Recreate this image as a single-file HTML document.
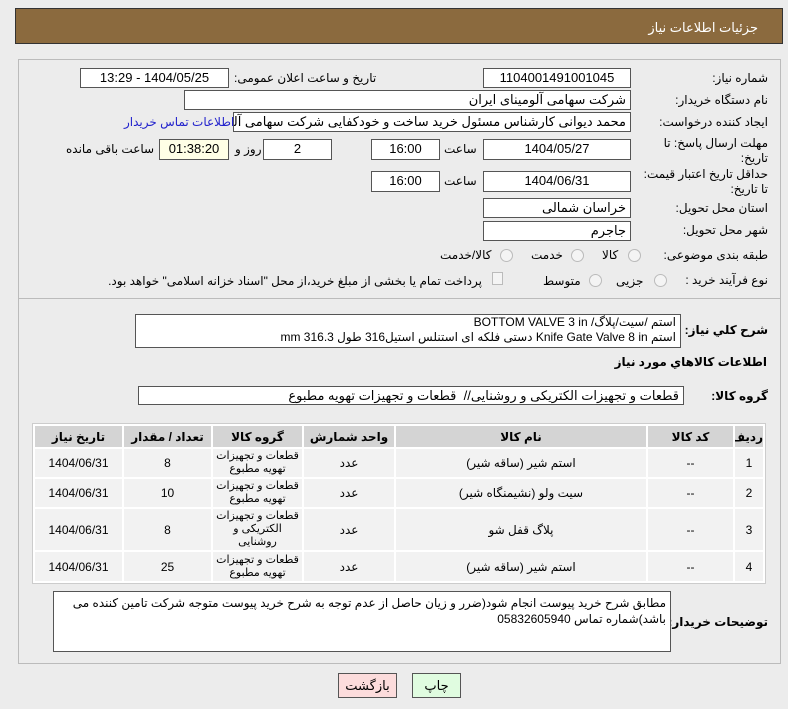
<!DOCTYPE html>
<html><head><meta charset="utf-8"><style>
body{margin:0;width:788px;height:709px;background:#ececec;font-family:"Liberation Sans","DejaVu Sans",sans-serif;font-size:12px;color:#000;position:relative;overflow:hidden}
.a{position:absolute;white-space:nowrap}
.box{position:absolute;background:#fff;border:1px solid #555;box-sizing:border-box;text-align:center;line-height:18px;font-size:13px;direction:rtl;overflow:hidden;white-space:nowrap}
.l{position:absolute;white-space:nowrap;font-size:12px;direction:rtl}
.r{text-align:right;padding-right:4px}
table{position:absolute;left:32px;top:423px;width:734px;border-collapse:separate;border-spacing:2px;background:#fff;border:1px solid #ccc;font-size:12px;table-layout:fixed;direction:rtl}
th{background:#d4d4d4;height:21px;font-weight:bold;padding:0;white-space:nowrap;overflow:hidden}
td{background:#f2f2f2;text-align:center;padding:0;overflow:hidden}
td.g{font-size:11px;line-height:13px}
.rad{position:absolute;width:11px;height:11px;border-radius:50%;border:1px solid #bbb;background:#f4f4f4}
</style></head><body>
<div class="a" style="left:15px;top:8px;width:768px;height:36px;background:#8b6a3e;border:1px solid #333;box-sizing:border-box"></div>
<div class="l" style="right:30px;top:20px;color:#fff;font-size:13px">جزئیات اطلاعات نیاز</div>
<div class="a" style="left:18px;top:59px;width:763px;height:605px;border:1px solid #bbb;box-sizing:border-box"></div>
<div class="a" style="left:18px;top:298px;width:763px;height:1px;background:#bbb"></div>

<div class="l" style="right:20px;top:71px">شماره نیاز:</div>
<div class="box" style="left:483px;top:68px;width:148px;height:20px">1104001491001045</div>
<div class="l" style="left:234px;top:71px">تاریخ و ساعت اعلان عمومی:</div>
<div class="box" style="left:80px;top:68px;width:149px;height:20px">1404/05/25 - 13:29</div>

<div class="l" style="right:20px;top:93px">نام دستگاه خریدار:</div>
<div class="box r" style="left:184px;top:90px;width:447px;height:20px">شرکت سهامی آلومینای ایران</div>

<div class="l" style="right:20px;top:115px">ایجاد کننده درخواست:</div>
<div class="box r" style="left:233px;top:112px;width:398px;height:20px">محمد دیوانی کارشناس مسئول خرید ساخت و خودکفایی شرکت سهامی آلومینا</div>
<div class="l" style="left:124px;top:115px;color:#2222cc">اطلاعات تماس خریدار</div>

<div class="l" style="right:20px;top:136px;line-height:15px;text-align:right">مهلت ارسال پاسخ: تا<br>تاریخ:</div>
<div class="box" style="left:483px;top:139px;width:148px;height:21px">1404/05/27</div>
<div class="l" style="left:444px;top:142px">ساعت</div>
<div class="box" style="left:371px;top:139px;width:69px;height:21px">16:00</div>
<div class="box" style="left:263px;top:139px;width:69px;height:21px">2</div>
<div class="l" style="left:235px;top:142px">روز و</div>
<div class="box" style="left:159px;top:139px;width:70px;height:21px;background:#ffffe6">01:38:20</div>
<div class="l" style="left:66px;top:142px">ساعت باقی مانده</div>

<div class="l" style="right:20px;top:167px;line-height:15px;text-align:right">حداقل تاریخ اعتبار قیمت:<br>تا تاریخ:</div>
<div class="box" style="left:483px;top:171px;width:148px;height:21px">1404/06/31</div>
<div class="l" style="left:444px;top:174px">ساعت</div>
<div class="box" style="left:371px;top:171px;width:69px;height:21px">16:00</div>

<div class="l" style="right:20px;top:201px">استان محل تحویل:</div>
<div class="box r" style="left:483px;top:198px;width:148px;height:20px">خراسان شمالی</div>
<div class="l" style="right:20px;top:223px">شهر محل تحویل:</div>
<div class="box r" style="left:483px;top:221px;width:148px;height:20px">جاجرم</div>

<div class="l" style="right:20px;top:248px">طبقه بندی موضوعی:</div>
<div class="rad" style="left:628px;top:249px"></div><div class="l" style="left:602px;top:248px">کالا</div>
<div class="rad" style="left:571px;top:249px"></div><div class="l" style="left:531px;top:248px">خدمت</div>
<div class="rad" style="left:500px;top:249px"></div><div class="l" style="left:440px;top:248px">کالا/خدمت</div>

<div class="l" style="right:20px;top:273px">نوع فرآیند خرید :</div>
<div class="rad" style="left:654px;top:274px"></div><div class="l" style="left:616px;top:274px">جزیی</div>
<div class="rad" style="left:589px;top:274px"></div><div class="l" style="left:543px;top:274px">متوسط</div>
<div class="a" style="left:492px;top:272px;width:9px;height:11px;border:1px solid #bbb;background:#f4f4f4"></div>
<div class="l" style="left:102px;top:274px;width:380px;overflow:hidden;text-align:right">پرداخت تمام یا بخشی از مبلغ خرید،از محل "اسناد خزانه اسلامی" خواهد بود.</div>

<div class="l" style="right:20px;top:323px;font-weight:bold">شرح کلي نیاز:</div>
<div class="box r" style="left:135px;top:314px;width:546px;height:34px;line-height:15px;font-size:12px">استم /سیت/پلاگ/ BOTTOM VALVE 3 in<br>استم Knife Gate Valve 8 in دستی فلکه ای استنلس استیل316 طول 316.3 mm</div>

<div class="l" style="right:21px;top:355px;font-weight:bold">اطلاعات کالاهاي مورد نیاز</div>
<div class="l" style="right:20px;top:389px;font-weight:bold">گروه کالا:</div>
<div class="box r" style="left:138px;top:386px;width:546px;height:19px;line-height:17px">قطعات و تجهیزات الکتریکی و روشنایی// &nbsp;قطعات و تجهیزات تهویه مطبوع</div>

<table>
<colgroup><col style="width:28px"><col style="width:85px"><col style="width:250px"><col style="width:90px"><col style="width:89px"><col style="width:87px"><col></colgroup>
<tr><th>ردیف</th><th>کد کالا</th><th>نام کالا</th><th>واحد شمارش</th><th>گروه کالا</th><th>تعداد / مقدار</th><th>تاریخ نیاز</th></tr>
<tr style="height:28px"><td>1</td><td>--</td><td>استم شیر (ساقه شیر)</td><td>عدد</td><td class="g">قطعات و تجهیزات<br>تهویه مطبوع</td><td>8</td><td>1404/06/31</td></tr>
<tr style="height:28px"><td>2</td><td>--</td><td>سیت ولو (نشیمنگاه شیر)</td><td>عدد</td><td class="g">قطعات و تجهیزات<br>تهویه مطبوع</td><td>10</td><td>1404/06/31</td></tr>
<tr style="height:41px"><td>3</td><td>--</td><td>پلاگ قفل شو</td><td>عدد</td><td class="g">قطعات و تجهیزات<br>الکتریکی و<br>روشنایی</td><td>8</td><td>1404/06/31</td></tr>
<tr style="height:29px"><td>4</td><td>--</td><td>استم شیر (ساقه شیر)</td><td>عدد</td><td class="g">قطعات و تجهیزات<br>تهویه مطبوع</td><td>25</td><td>1404/06/31</td></tr>
</table>

<div class="l" style="right:20px;top:615px;font-weight:bold">توضیحات خریدار:</div>
<div class="box r" style="left:53px;top:591px;width:618px;height:61px;line-height:16px;font-size:12px;white-space:normal;padding-top:3px">مطابق شرح خرید پیوست انجام شود(ضرر و زیان حاصل از عدم توجه به شرح خرید پیوست متوجه شرکت تامین کننده می باشد)شماره تماس 05832605940</div>

<div class="box" style="left:338px;top:673px;width:59px;height:25px;background:#fcdcdc;line-height:23px">بازگشت</div>
<div class="box" style="left:412px;top:673px;width:49px;height:25px;background:#e0fce0;line-height:23px">چاپ</div>
</body></html>
